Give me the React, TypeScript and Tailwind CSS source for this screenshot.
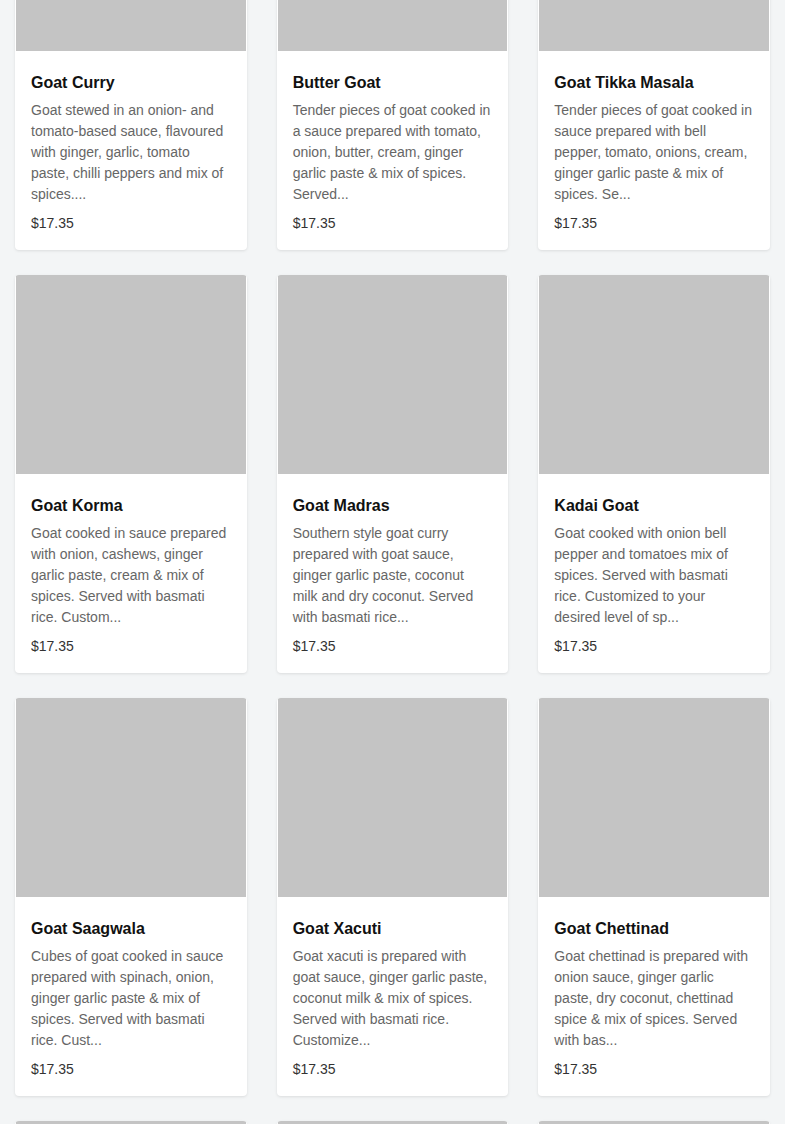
import React from "react";

const items = [
  { t: "Goat Curry", d: "Goat stewed in an onion- and tomato-based sauce, flavoured with ginger, garlic, tomato paste, chilli peppers and mix of spices...." },
  { t: "Butter Goat", d: "Tender pieces of goat cooked in a sauce prepared with tomato, onion, butter, cream, ginger garlic paste & mix of spices. Served..." },
  { t: "Goat Tikka Masala", d: "Tender pieces of goat cooked in sauce prepared with bell pepper, tomato, onions, cream, ginger garlic paste & mix of spices. Se..." },
  { t: "Goat Korma", d: "Goat cooked in sauce prepared with onion, cashews, ginger garlic paste, cream & mix of spices. Served with basmati rice. Custom..." },
  { t: "Goat Madras", d: "Southern style goat curry prepared with goat sauce, ginger garlic paste, coconut milk and dry coconut. Served with basmati rice..." },
  { t: "Kadai Goat", d: "Goat cooked with onion bell pepper and tomatoes mix of spices. Served with basmati rice. Customized to your desired level of sp..." },
  { t: "Goat Saagwala", d: "Cubes of goat cooked in sauce prepared with spinach, onion, ginger garlic paste & mix of spices. Served with basmati rice. Cust..." },
  { t: "Goat Xacuti", d: "Goat xacuti is prepared with goat sauce, ginger garlic paste, coconut milk & mix of spices. Served with basmati rice. Customize..." },
  { t: "Goat Chettinad", d: "Goat chettinad is prepared with onion sauce, ginger garlic paste, dry coconut, chettinad spice & mix of spices. Served with bas..." },
  { t: "Goat Vindaloo", d: "Goat cooked in a spicy sauce prepared with vinegar, potatoes, ginger garlic paste & mix of spices. Served with basmati rice..." },
  { t: "Goat Rogan Josh", d: "Goat cooked in a sauce prepared with onion, tomato, yogurt, ginger garlic paste & mix of spices. Served with basmati rice..." },
  { t: "Goat Biryani", d: "Basmati rice cooked with goat, herbs, saffron, ginger garlic paste & mix of spices. Served with raita. Customized to your desi..." },
];

export default function App() {
  return (
    <div
      className="min-h-screen h-[1124px] overflow-hidden bg-[#f3f5f6]"
      style={{ fontFamily: '"Liberation Sans", Arial, sans-serif' }}
    >
      <div className="-mt-[148px] grid grid-cols-3 gap-x-[30px] gap-y-[25px] px-[15px]">
        {items.map((it) => (
          <div
            key={it.t}
            className="flex h-[398px] flex-col overflow-hidden rounded-[4px] bg-white shadow-[0_1px_3px_rgba(0,0,0,0.10)]"
          >
            <div className="mx-px h-[199px] shrink-0 bg-[#c4c4c4]" />
            <div className="flex flex-col px-[16px] pb-[16px] pt-[20px]">
              <div className="text-[16px] font-bold leading-[24px] text-[#111]">{it.t}</div>
              <div className="mt-[5px] h-[105px] text-[14px] leading-[21px] text-[#666]">{it.d}</div>
              <div className="mt-[8px] text-[14px] leading-[21px] text-[#333]">$17.35</div>
            </div>
          </div>
        ))}
      </div>
    </div>
  );
}
